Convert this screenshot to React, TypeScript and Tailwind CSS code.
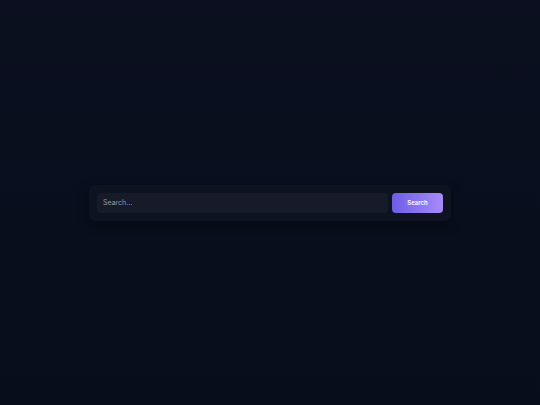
import { useState } from "react"

export default function App() {
  const [query, setQuery] = useState("")

  return (
    <div
      className="w-full h-[405px] flex items-center justify-center bg-gradient-to-b from-[#0b0f1f] to-[#060e1b]"
      style={{ fontFamily: "Inter, 'Liberation Sans', sans-serif" }}
    >
      <div className="w-[362px] h-[36px] flex items-center gap-[4px] p-[8px] rounded-[6px] bg-[#0e1321] shadow-[0_4px_12px_rgba(0,0,0,0.35)]">
        <input
          value={query}
          onChange={(e) => setQuery(e.target.value)}
          placeholder="Search..."
          className="flex-1 min-w-0 h-[20px] px-[6px] rounded-[4px] bg-[#171b29] text-[7px] text-gray-200 placeholder:text-[#959aa6] outline-none"
        />
        <button className="w-[51px] h-[20px] shrink-0 rounded-[4px] bg-gradient-to-r from-[#6e5ce6] to-[#a78bfa] text-[6px] font-semibold text-white">
          Search
        </button>
      </div>
    </div>
  )
}
